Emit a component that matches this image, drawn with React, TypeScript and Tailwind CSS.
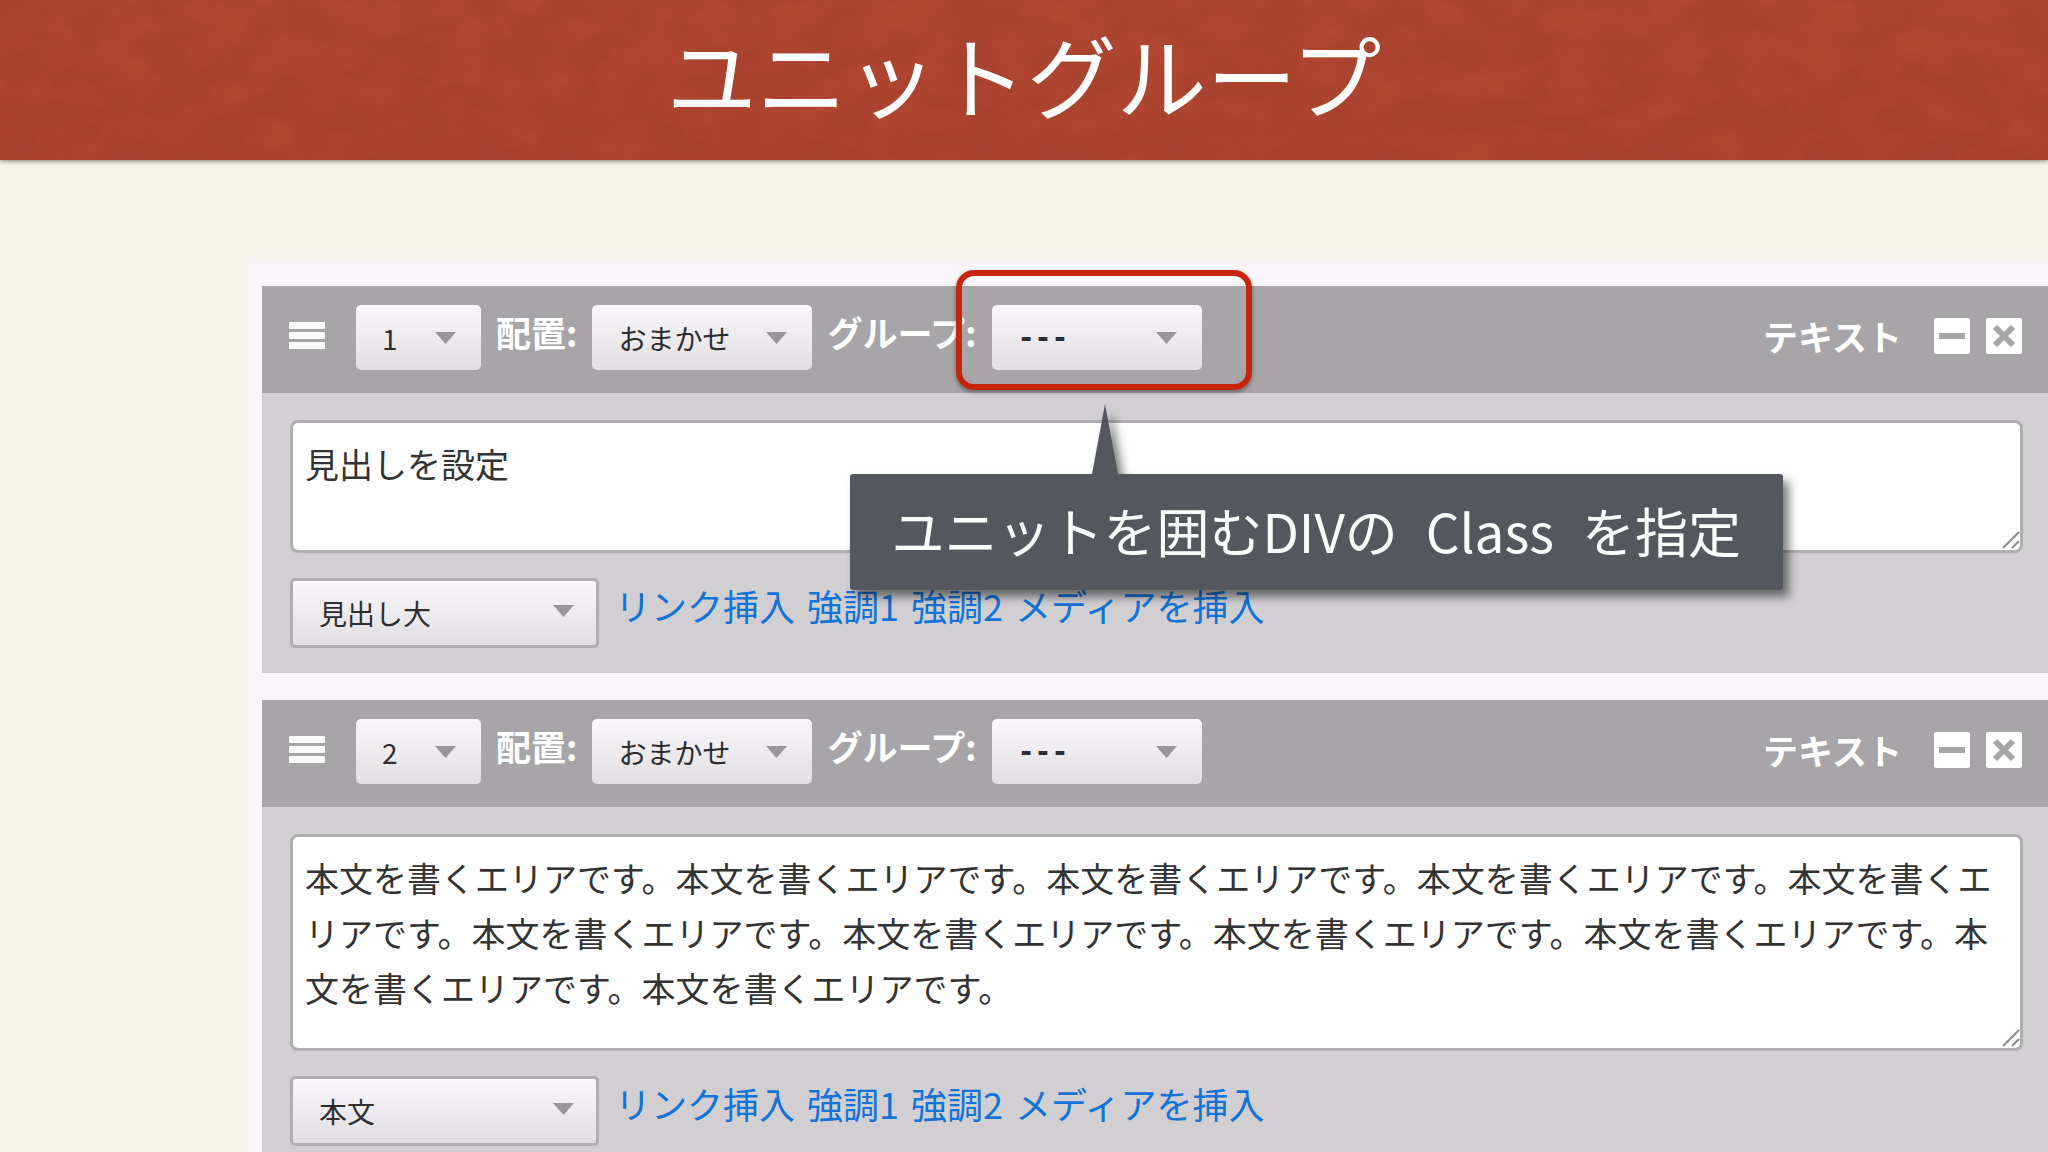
import { useId, useState } from 'react'
import type { ReactNode } from 'react'

interface Unit {
  no: string
  text: string
  tag: string
  areaClass: string
  callout?: ReactNode
}

const SENTENCE = '本文を書くエリアです。'

const UNITS: Unit[] = [
  {
    no: '1',
    text: '見出しを設定',
    tag: '見出し大',
    areaClass: 'h-[133px]',
    callout: (
      <>
        ユニットを囲むDIVの <span className="px-4">Class</span> を指定
      </>
    )
  },
  {
    no: '2',
    text: SENTENCE.repeat(11),
    tag: '本文',
    areaClass: 'h-[217px]'
  }
]

const INSERT_LINKS = ['リンク挿入', '強調1', '強調2', 'メディアを挿入']

interface SelectBoxProps {
  id?: string
  label?: string
  options: string[]
  defaultValue: string
  className: string
  children?: ReactNode
}

function SelectBox({ id, label, options, defaultValue, className, children }: SelectBoxProps) {
  return (
    <div className="relative shrink-0 font-normal">
      <select
        id={id}
        aria-label={label}
        defaultValue={defaultValue}
        className={`block appearance-none rounded-[5px] bg-linear-to-b from-[#f9f7f9] to-[#e1dfe2] pl-[26px] text-[28px] text-[#2e2d30] ${className}`}
      >
        {options.map((o) => (
          <option key={o}>{o}</option>
        ))}
      </select>
      <svg
        className="absolute right-[25px] top-[27px] pointer-events-none"
        width="21"
        height="12"
        viewBox="0 0 21 12"
      >
        <path d="M0 0H21L10.5 12Z" fill="#98969a" />
      </svg>
      {children}
    </div>
  )
}

function Callout({ children }: { children: ReactNode }) {
  return (
    <>
      {/* Frame around the group select */}
      <div className="absolute -left-9 -right-[50px] -top-[35px] -bottom-5 z-10 rounded-[18px] border-[6px] border-[#c8260c] shadow-[0_2px_4px_rgba(0,0,0,0.4)] pointer-events-none" />
      {/* Balloon pointing up at it */}
      <div className="absolute -left-[142px] top-[99px] z-10 w-[933px] drop-shadow-[6px_7px_5px_rgba(0,0,0,0.5)]">
        <svg className="ml-[242px] block" width="26" height="70" viewBox="0 0 26 70">
          <path d="M13 0L26 70H0Z" fill="#54575f" />
        </svg>
        <p className="h-[116px] rounded-[3px] bg-[#54575f] text-center text-[53px] leading-[112px] whitespace-nowrap text-[#fbfdff]">
          {children}
        </p>
      </div>
    </>
  )
}

function UnitPanel({ unit }: { unit: Unit }) {
  const id = useId()
  const [text, setText] = useState(unit.text)

  return (
    <section className="bg-[#d1cfd2]">
      {/* Toolbar */}
      <div className="flex h-[107px] items-center gap-[15px] bg-[#a7a5a8] pb-1 pl-[27px] pr-[26px] text-[35px] font-bold text-white">
        <button className="mr-4 shrink-0 pb-1" aria-label="並べ替え">
          <svg width="36" height="27" viewBox="0 0 36 27" fill="#fbfbfb">
            <rect width="36" height="7" rx="1" />
            <rect y="10" width="36" height="7" rx="1" />
            <rect y="20" width="36" height="7" rx="1" />
          </svg>
        </button>
        <SelectBox
          label="順番"
          options={['1', '2']}
          defaultValue={unit.no}
          className="h-[65px] w-[125px]"
        />
        <label htmlFor={`${id}-align`} className="shrink-0 pb-3 leading-10">
          配置:
        </label>
        <SelectBox
          id={`${id}-align`}
          options={['おまかせ']}
          defaultValue="おまかせ"
          className="h-[65px] w-[220px]"
        />
        <label htmlFor={`${id}-group`} className="shrink-0 pb-3 leading-10">
          グループ:
        </label>
        <SelectBox
          id={`${id}-group`}
          options={['---']}
          defaultValue="---"
          className="h-[65px] w-[210px] font-['DejaVu_Sans_Mono',monospace] font-bold"
        >
          {unit.callout && <Callout>{unit.callout}</Callout>}
        </SelectBox>

        <div className="ml-auto flex items-center gap-4 pb-1">
          <h2 className="mr-4 leading-10">テキスト</h2>
          <button aria-label="最小化">
            <svg width="36" height="36" viewBox="0 0 36 36">
              <rect width="36" height="36" rx="2" fill="#fff" />
              <path d="M5 18H31" stroke="#a7a5a8" strokeWidth="6" />
            </svg>
          </button>
          <button aria-label="削除">
            <svg width="36" height="36" viewBox="0 0 36 36">
              <rect width="36" height="36" rx="2" fill="#fff" />
              <path d="M9 9L27 27M27 9L9 27" stroke="#a7a5a8" strokeWidth="6" />
            </svg>
          </button>
        </div>
      </div>

      {/* Body */}
      <div className="flex flex-col gap-[25px] pt-[27px] pr-[25px] pb-[25px] pl-7">
        <div className="relative">
          <textarea
            aria-label="テキスト"
            value={text}
            onChange={(e) => setText(e.target.value)}
            className={`block w-full resize-none overflow-hidden rounded-lg border-[3px] border-[#b0aeb1] bg-[#fefefe] py-[13px] pr-[10px] pl-3 text-[34px] leading-[55px] text-[#333] ${unit.areaClass}`}
          />
          <svg
            className="absolute right-[3px] bottom-1 pointer-events-none"
            width="18"
            height="18"
            viewBox="0 0 18 18"
          >
            <path d="M1 17L17 1M10 17L17 10" stroke="#8c8a8d" strokeWidth="2" />
          </svg>
        </div>
        <div className="flex items-center gap-4">
          <SelectBox
            label="タグ"
            options={['見出し大', '本文']}
            defaultValue={unit.tag}
            className="h-[70px] w-[309px] border-[3px] border-[#b0aeb1]"
          />
          <div className="flex gap-3 pb-4 text-[36px] leading-10 text-[#1273d8]">
            {INSERT_LINKS.map((name) => (
              <a key={name} href="#">
                {name}
              </a>
            ))}
          </div>
        </div>
      </div>
    </section>
  )
}

export default function App() {
  return (
    <div className="h-screen overflow-hidden bg-[#f6f6e9] font-['Noto_Sans_CJK_JP',sans-serif]">
      <header className="relative h-40 bg-linear-to-b from-[#b24832] to-[#b14530] shadow-[0_1px_5px_rgba(0,0,0,0.5)]">
        {/* Paper grain */}
        <svg className="absolute inset-0 h-full w-full opacity-5" aria-hidden="true">
          <filter id="grain">
            <feTurbulence type="fractalNoise" baseFrequency="0.02 0.03" numOctaves="6" />
            <feColorMatrix values="0 0 0 0 0  0 0 0 0 0  0 0 0 0 0  2 0 0 0 -0.4" />
          </filter>
          <rect width="100%" height="100%" filter="url(#grain)" />
        </svg>
        <h1 className="relative text-center text-[90px] leading-[146px] font-normal text-white">
          ユニットグループ
        </h1>
      </header>

      <main className="mt-[104px] ml-[250px] flex flex-col gap-[27px] bg-[#f8f6f8] pt-[22px] pl-3 shadow-[0_0_10px_5px_#f8f6f8]">
        {UNITS.map((unit) => (
          <UnitPanel key={unit.no} unit={unit} />
        ))}
      </main>
    </div>
  )
}
